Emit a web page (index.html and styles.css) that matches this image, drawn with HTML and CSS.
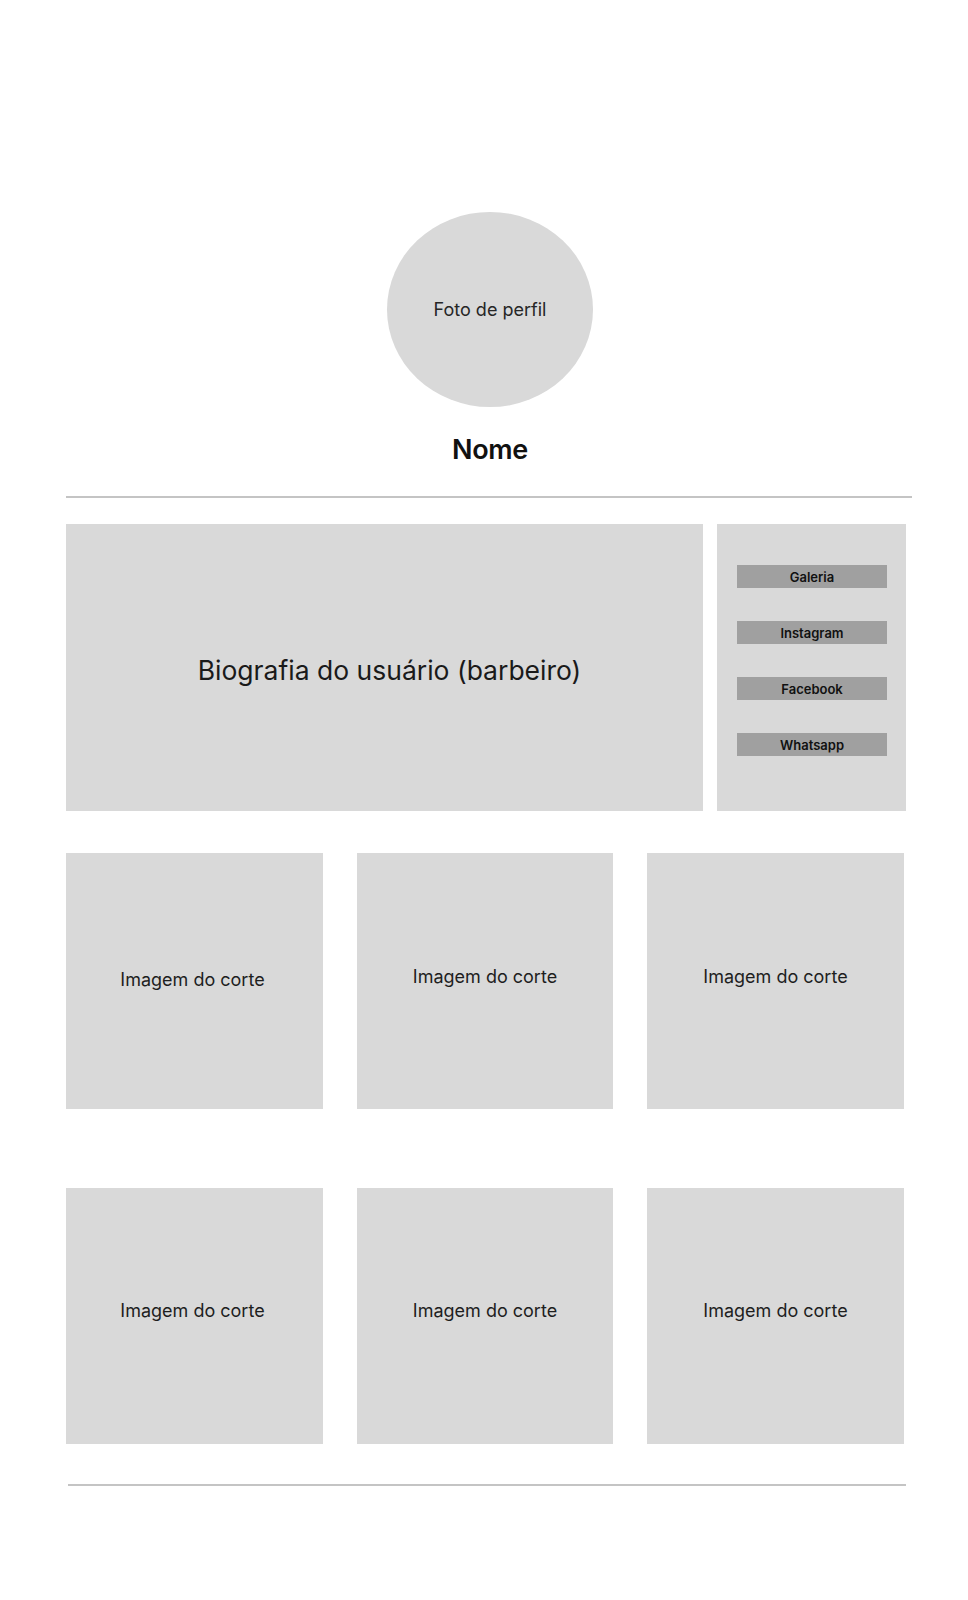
FILE: index.html
```html
<!DOCTYPE html>
<html lang="pt-BR">
<head>
<meta charset="utf-8">
<title>Perfil do barbeiro</title>
<link rel="stylesheet" href="styles.css">
</head>
<body>
<main class="page">
  <header class="profile">
    <div class="avatar">Foto de perfil</div>
    <h1 class="name">Nome</h1>
  </header>
  <hr class="rule rule-top">
  <section class="about">
    <div class="bio">Biografia do usuário (barbeiro)</div>
    <nav class="links">
      <a class="link-btn">Galeria</a>
      <a class="link-btn">Instagram</a>
      <a class="link-btn">Facebook</a>
      <a class="link-btn">Whatsapp</a>
    </nav>
  </section>
  <section class="gallery">
    <div class="cut cut-first">Imagem do corte</div>
    <div class="cut">Imagem do corte</div>
    <div class="cut">Imagem do corte</div>
    <div class="cut cut-low cut-first">Imagem do corte</div>
    <div class="cut cut-low">Imagem do corte</div>
    <div class="cut cut-low">Imagem do corte</div>
  </section>
  <hr class="rule rule-bottom">
</main>
</body>
</html>
```
FILE: styles.css
```css
* { box-sizing: border-box; }

html, body {
  margin: 0;
  padding: 0;
  background: #ffffff;
}

body {
  font-family: Inter, "Noto Sans", "Liberation Sans", sans-serif;
  color: #1e1e1e;
}

.page {
  width: 846px;
  margin-left: 66px;
  padding-top: 212px;
  padding-bottom: 110px;
}

.profile {
  display: flex;
  flex-direction: column;
  align-items: center;
  padding-left: 2px;
}

.avatar {
  width: 206px;
  height: 195px;
  border-radius: 50%;
  background: #d9d9d9;
  display: flex;
  align-items: center;
  justify-content: center;
  font-size: 18px;
  color: #262626;
}

.name {
  margin: 26px 0 0;
  font-size: 27px;
  line-height: 33px;
  font-weight: 600;
  color: #111111;
  letter-spacing: -0.3px;
}

.rule {
  border: 0;
  height: 2px;
  background: #c4c4c4;
  margin: 0;
}

.rule-top {
  margin-top: 30px;
  width: 846px;
}

.about {
  display: flex;
  gap: 14px;
  margin-top: 26px;
  height: 287px;
}

.bio {
  width: 637px;
  background: #d9d9d9;
  display: flex;
  align-items: center;
  justify-content: center;
  padding: 4px 0 0 10px;
  font-size: 26.5px;
  color: #1a1a1a;
}

.links {
  width: 189px;
  background: #d9d9d9;
  display: flex;
  flex-direction: column;
  gap: 33px;
  padding: 41px 0 0 20px;
}

.link-btn {
  display: flex;
  align-items: center;
  justify-content: center;
  width: 150px;
  height: 23px;
  background: #a0a0a0;
  font-size: 13px;
  font-weight: 600;
  color: #111111;
  text-decoration: none;
}

.gallery {
  display: grid;
  grid-template-columns: 257px 256px 257px;
  column-gap: 34px;
  row-gap: 79px;
  margin-top: 42px;
  width: 838px;
}

.cut {
  height: 256px;
  background: #d9d9d9;
  display: flex;
  align-items: center;
  justify-content: center;
  padding-bottom: 10px;
  font-size: 18px;
  color: #1e1e1e;
}

.cut-first { padding-right: 4px; }
.cut-gallery-top { padding-bottom: 4px; }
.gallery .cut:first-child { padding-bottom: 4px; }
.cut-low { padding-bottom: 12px; }

.rule-bottom {
  margin-top: 40px;
  margin-left: 2px;
  width: 838px;
}
```
